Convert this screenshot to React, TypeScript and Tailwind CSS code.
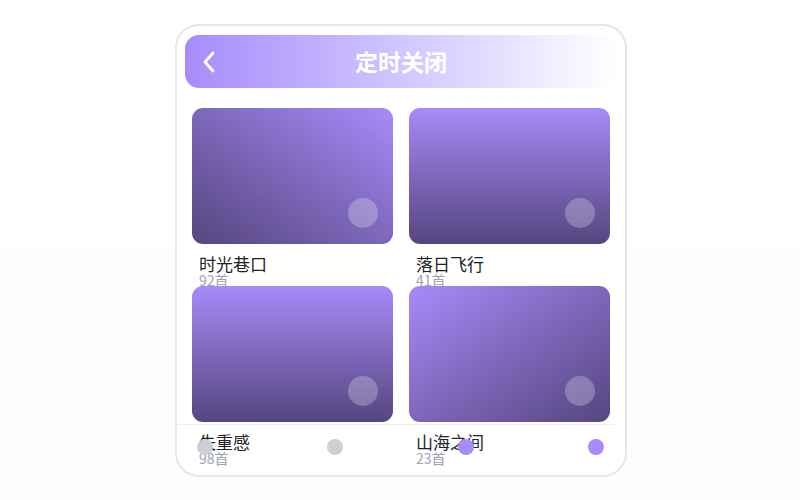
import React from "react";

const items = [
  { title: "时光巷口", count: "92首", grad: "bg-gradient-to-bl" },
  { title: "落日飞行", count: "41首", grad: "bg-gradient-to-b" },
  { title: "失重感", count: "98首", grad: "bg-gradient-to-b" },
  { title: "山海之间", count: "23首", grad: "bg-gradient-to-br" },
];

function Tile({ title, count, grad }: { title: string; count: string; grad: string }) {
  const gradClass =
    grad === "bg-gradient-to-bl"
      ? "bg-gradient-to-bl from-[#a78bfa] to-[#56467f]"
      : grad === "bg-gradient-to-br"
      ? "bg-gradient-to-br from-[#a78bfa] to-[#56467f]"
      : "bg-gradient-to-b from-[#a78bfa] to-[#56467f]";
  return (
    <div className="h-[178px] relative">
      <div className={`relative h-[136px] rounded-[11px] ${gradClass}`}>
        <div className="absolute right-[15px] bottom-[16px] w-[30px] h-[30px] rounded-full bg-white/25" />
      </div>
      <div className="mt-[11px] px-[7px]">
        <div className="text-[17px] leading-[18px] text-[#222222]">{title}</div>
        <div className="text-sm leading-[14px] text-[#9ca3af]">{count}</div>
      </div>
    </div>
  );
}

export default function App() {
  return (
    <div
      className="w-full h-[500px] flex justify-center pt-[24px] pl-[2px] bg-[linear-gradient(to_bottom,#ffffff_50%,#fdfdfd_50%)]"
      style={{ fontFamily: '"Noto Sans CJK SC", "Noto Sans", sans-serif' }}
    >
      <div className="relative w-[452px] h-[453px] border-2 border-[#e5e7eb] rounded-[24px] bg-white overflow-hidden px-2 pt-[9px]">
        <div className="relative h-[53px] rounded-[14px] bg-gradient-to-r from-[#a78bfa] to-white flex items-center justify-center">
          <svg
            className="absolute left-[16px] top-1/2 -translate-y-1/2"
            width="16"
            height="24"
            viewBox="0 0 16 24"
            fill="none"
          >
            <path d="M12 3 L4 12 L12 21" stroke="white" strokeWidth="2.8" strokeLinecap="round" strokeLinejoin="round" />
          </svg>
          <span className="text-[23px] font-bold text-white leading-none">定时关闭</span>
        </div>
        <div className="mt-[20px] px-[7px] grid grid-cols-2 gap-x-4">
          {items.map((it) => (
            <Tile key={it.title} {...it} />
          ))}
        </div>
        <div className="absolute left-0 right-[10px] bottom-0 h-[51px] border-t border-[#eceef1] flex items-start justify-between pt-[14px] pl-5 pr-[11px]">
          <div className="w-4 h-4 rounded-full bg-[#cbd0d6]" />
          <div className="w-4 h-4 rounded-full bg-[#cbd0d6]" />
          <div className="w-4 h-4 rounded-full bg-[#a78bfa]" />
          <div className="w-4 h-4 rounded-full bg-[#a78bfa]" />
        </div>
      </div>
    </div>
  );
}
